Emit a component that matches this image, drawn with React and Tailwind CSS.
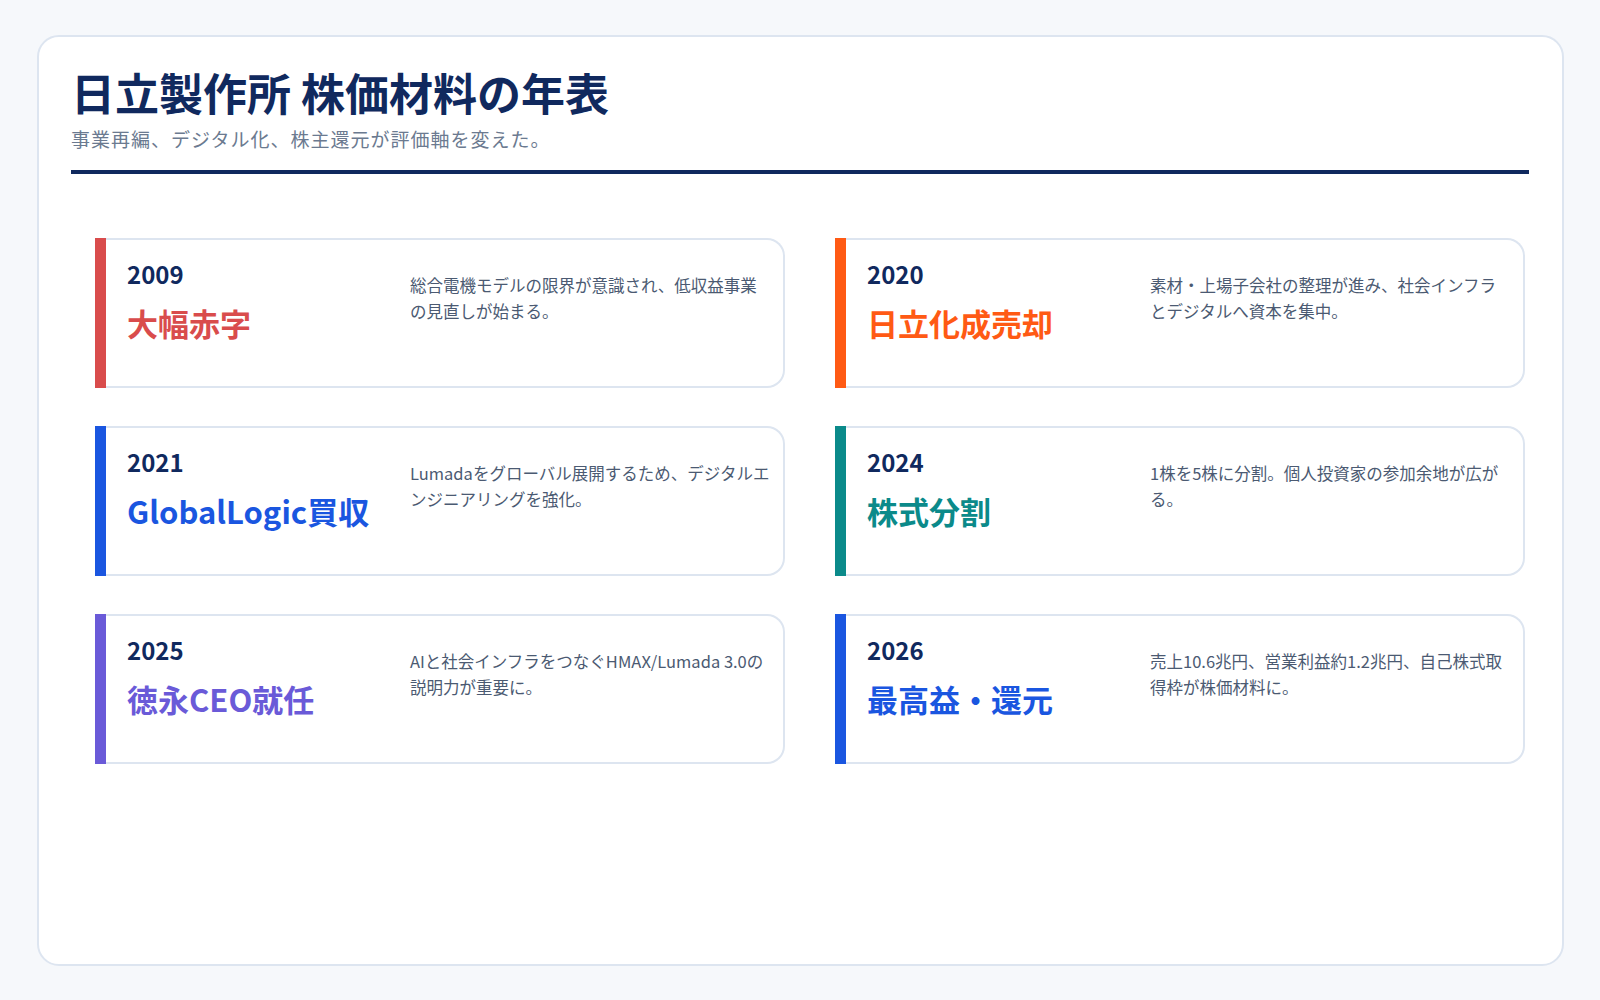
const items = [
  { y: "2009", t: "大幅赤字", d: "総合電機モデルの限界が意識され、低収益事業の見直しが始まる。", bar: "bg-[#d94c4c]", tx: "text-[#d94c4c]" },
  { y: "2020", t: "日立化成売却", d: "素材・上場子会社の整理が進み、社会インフラとデジタルへ資本を集中。", bar: "bg-[#ff5a14]", tx: "text-[#ff5a14]" },
  { y: "2021", t: "GlobalLogic買収", d: "Lumadaをグローバル展開するため、デジタルエンジニアリングを強化。", bar: "bg-[#1a56e0]", tx: "text-[#1a56e0]" },
  { y: "2024", t: "株式分割", d: "1株を5株に分割。個人投資家の参加余地が広がる。", bar: "bg-[#0b8a8a]", tx: "text-[#0b8a8a]" },
  { y: "2025", t: "徳永CEO就任", d: "AIと社会インフラをつなぐHMAX/Lumada 3.0の説明力が重要に。", bar: "bg-[#6a5ad8]", tx: "text-[#6a5ad8]" },
  { y: "2026", t: "最高益・還元", d: "売上10.6兆円、営業利益約1.2兆円、自己株式取得枠が株価材料に。", bar: "bg-[#1a56e0]", tx: "text-[#1a56e0]" },
];

export default function App() {
  return (
    <div className="w-[1600px] h-[1000px] bg-[#f6f8fb] pt-[35px] pl-[37px]" style={{ fontFamily: '"Noto Sans CJK JP", "Noto Sans", sans-serif' }}>
      <div className="w-[1527px] h-[931px] bg-white border-2 border-[#dde5f0] rounded-[22px] px-[32px] pt-[24px]">
        <h1 className="text-[44px] font-bold text-[#10295e] leading-[62px]">日立製作所 株価材料の年表</h1>
        <p className="text-[19px] tracking-[1px] text-[#6b7a90] leading-[28px] mt-[2px]">事業再編、デジタル化、株主還元が評価軸を変えた。</p>
        <div className="h-[4px] bg-[#10295e] mt-[17px] mr-[1px]" />
        <div className="grid grid-cols-2 gap-x-[50px] gap-y-[38px] mt-[64px] pl-[24px] pr-[5px]">
          {items.map((it) => (
            <div key={it.y} className="flex h-[150px]">
              <div className={`w-[11px] ${it.bar}`} />
              <div className="flex-1 border-2 border-l-0 border-[#dde5f0] rounded-r-[18px] flex pl-[21px] pt-[17px]">
                <div className="w-[283px]">
                  <div className="text-[24px] font-bold text-[#10295e] leading-[34px]">{it.y}</div>
                  <div className={`text-[31px] font-bold ${it.tx} leading-[40px] mt-[12px]`}>{it.t}</div>
                </div>
                <p className="w-[362px] text-[16.5px] text-[#4b5a72] leading-[26px] mt-[15px]">{it.d}</p>
              </div>
            </div>
          ))}
        </div>
      </div>
    </div>
  );
}
